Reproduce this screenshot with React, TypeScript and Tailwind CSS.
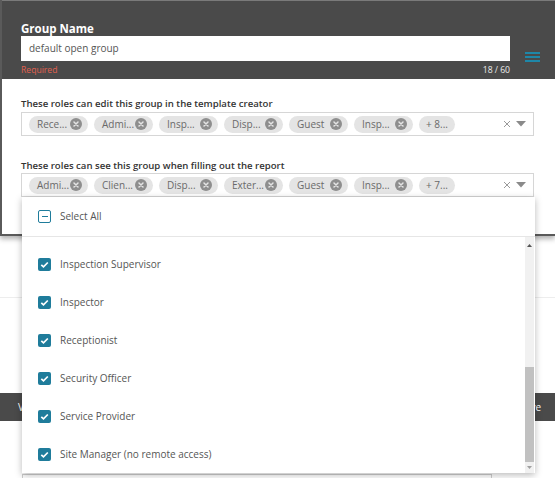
const TEAL = '#1f7c9b'

const editRoles = ['Rece...', 'Admi...', 'Insp...', 'Disp...', 'Guest', 'Insp...']
const seeRoles = ['Admi...', 'Clien...', 'Disp...', 'Exter...', 'Guest', 'Insp...']
const options = [
  'Inspection Supervisor',
  'Inspector',
  'Receptionist',
  'Security Officer',
  'Service Provider',
  'Site Manager (no remote access)',
]

function ChipRemove() {
  return (
    <svg width="12" height="12" viewBox="0 0 12 12" className="shrink-0">
      <circle cx="6" cy="6" r="6" fill="#8e8e8e" />
      <path d="M4 4l4 4M8 4l-4 4" stroke="#e4e4e4" strokeWidth="1.5" strokeLinecap="round" />
    </svg>
  )
}

function Chip({ label }: { label: string }) {
  return (
    <div className="flex h-[17px] w-[59px] shrink-0 items-center justify-between rounded-full bg-[#e4e4e4] pl-[8px] pr-[6px] text-[10px] text-[#6a6a6a]">
      <span>{label}</span>
      <ChipRemove />
    </div>
  )
}

function MultiSelect({ roles, more }: { roles: string[]; more: string }) {
  return (
    <div className="flex h-[24px] w-[513px] items-center border border-[#d6d6d6] bg-white pl-[7px] pr-[7px]">
      <div className="flex gap-[6px]">
        {roles.map((r, i) => (
          <Chip key={i} label={r} />
        ))}
        <div className="flex h-[17px] items-center rounded-full bg-[#e4e4e4] px-[7px] text-[10px] text-[#6a6a6a]">
          {more}
        </div>
      </div>
      <div className="ml-auto flex items-center gap-[5px]">
        <svg width="8" height="8" viewBox="0 0 8 8">
          <path d="M1 1l6 6M7 1L1 7" stroke="#9a9a9a" strokeWidth="1" />
        </svg>
        <svg width="10" height="6" viewBox="0 0 10 6">
          <path d="M0 0h10L5 5.5z" fill="#8a8a8a" />
        </svg>
      </div>
    </div>
  )
}

function Checked() {
  return (
    <div className="flex h-[13px] w-[13px] shrink-0 items-center justify-center rounded-[2px] bg-[#1f7c9b]">
      <svg width="11" height="11" viewBox="0 0 11 11">
        <path d="M2.3 5.8l2.2 2.1 4.3-4.4" fill="none" stroke="white" strokeWidth="1.7" />
      </svg>
    </div>
  )
}

function Dropdown() {
  return (
    <div className="absolute left-[22px] top-[197px] z-20 flex h-[276px] w-[513px] flex-col bg-white shadow-[0_2px_7px_rgba(0,0,0,0.28)]">
      <div className="flex h-[40px] shrink-0 items-center gap-[9px] border-b border-[#e6e6e6] pl-[16px] text-[10px] text-[#555]">
        <div
          className="flex h-[13px] w-[13px] items-center justify-center rounded-[2px] border-[1.5px] bg-white"
          style={{ borderColor: TEAL }}
        >
          <div className="h-[1.5px] w-[6px] bg-[#1f7c9b]" />
        </div>
        <span>Select All</span>
      </div>
      <div className="flex min-h-0 flex-1">
        <div className="flex-1 pt-[8px]">
          {options.map((o) => (
            <div key={o} className="flex h-[38px] items-center gap-[9px] pl-[16px] text-[10px] text-[#555]">
              <Checked />
              <span>{o}</span>
            </div>
          ))}
        </div>
        <div className="mr-[1px] flex w-[9px] flex-col bg-[#f1f1f1]">
          <div className="flex h-[10px] items-end justify-center">
            <svg width="5" height="3" viewBox="0 0 5 3">
              <path d="M0 3h5L2.5 0z" fill="#555" />
            </svg>
          </div>
          <div className="h-[120px]" />
          <div className="h-[95px] bg-[#c1c1c1]" />
          <div className="flex flex-1 items-center justify-center">
            <svg width="5" height="3" viewBox="0 0 5 3">
              <path d="M0 0h5L2.5 3z" fill="#a0a0a0" />
            </svg>
          </div>
        </div>
      </div>
    </div>
  )
}

function Dialog() {
  return (
    <div className="relative z-10 h-[236px] border-b-2 border-l-2 border-[#5a5a5a] bg-white shadow-[0_3px_5px_rgba(0,0,0,0.3)]">
      <div className="flex h-[79px] items-start border-t border-[#7a7a7a] bg-[#4a4a4a] pl-[19px] pt-[21px]">
        <div className="w-[489px]">
          <div className="text-[11.5px] font-bold leading-[13px] text-white">Group Name</div>
          <div className="mt-[1px] flex h-[25px] items-center bg-white pl-[8px] text-[10px] text-[#555]">
            default open group
          </div>
          <div className="mt-[3px] flex justify-between text-[8.6px] leading-[12px]">
            <span className="text-[#e0604f]">Required</span>
            <span className="text-[#eaeaea]">18 / 60</span>
          </div>
        </div>
        <div className="ml-[15px] mt-[30px] flex flex-col gap-[2px]">
          <div className="h-[2px] w-[15px] bg-[#1e87a8]" />
          <div className="h-[2px] w-[15px] bg-[#1e87a8]" />
          <div className="h-[2px] w-[15px] bg-[#1e87a8]" />
        </div>
      </div>
      <div className="pl-[19px] pt-[18px]">
        <div className="text-[9.6px] font-semibold leading-[14px] text-[#333]">
          These roles can edit this group in the template creator
        </div>
        <div className="mt-[1px]">
          <MultiSelect roles={editRoles} more="+ 8..." />
        </div>
        <div className="mt-[23px] text-[9.6px] font-semibold leading-[14px] text-[#333]">
          These roles can see this group when filling out the report
        </div>
        <MultiSelect roles={seeRoles} more="+ 7..." />
      </div>
    </div>
  )
}

function PageBelow() {
  return (
    <div className="pt-[61px]">
      <div className="h-px bg-[#ededed]" />
      <div className="mt-[95px] flex h-[28px] items-center justify-between bg-[#4a4a4a] pl-[18px] pr-[14px] text-[10px] text-white">
        <span>View</span>
        <span>Save</span>
      </div>
      <div className="ml-[22px] mt-[53px] h-[20px] w-[470px] border border-[#cfcfcf]" />
    </div>
  )
}

export default function App() {
  return (
    <div className="relative h-[478px] w-[555px] overflow-hidden bg-white font-['Open_Sans',sans-serif]">
      <Dialog />
      <PageBelow />
      <Dropdown />
    </div>
  )
}
